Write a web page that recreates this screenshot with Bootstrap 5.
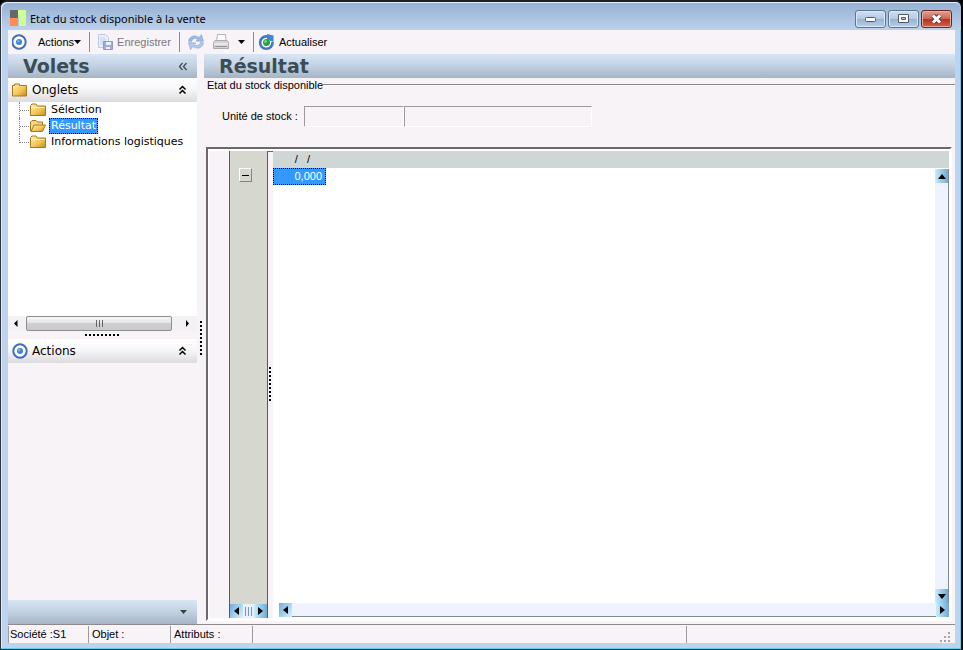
<!DOCTYPE html>
<html lang="fr">
<head>
<meta charset="utf-8">
<meta name="viewport" content="width=device-width, initial-scale=1">
<title>Etat du stock disponible à la vente</title>
<link href="https://cdn.jsdelivr.net/npm/bootstrap@5.3.0/dist/css/bootstrap.min.css" rel="stylesheet">
<style>
:root{--face:#f7f3f7;--frame:#bdd3ef}
body{font:11px/13px "Liberation Sans",Arial,sans-serif;color:#000;background:#000}
button{font:inherit;color:inherit;background:none;border:0;padding:0;line-height:13px}
svg{display:block;flex:none}
.win{background:var(--frame);border:1px solid #303438;border-top:2px solid #1c1f24;border-right:2px solid #000;box-shadow:inset -1px -1px #5cd3ee,inset 1px 1px #e4eefa;border-radius:7px 7px 0 0;padding:1px 6px 6px 7px}
.titlebar{height:27px;background:linear-gradient(#96b1d2,#a5bedd 40%,#bcd2ec);margin:0 -6px;padding:4px 9px 0 7px;border-radius:6px 6px 0 0}
.titlebar h1{font:11px/16px "Noto Sans","Open Sans",sans-serif;margin:0}
.wbtns{gap:2px}
.wbtn{width:31px;height:18px;border:1px solid #5c7592;border-radius:3px;background:linear-gradient(#cfdff0,#b4cae4 48%,#96b3d3 50%,#b5cfea);box-shadow:inset 0 0 0 1px #dbe8f7}
.wbtn.closer{background:linear-gradient(#e0a192,#cf6652 48%,#b8301c 50%,#d5604a);border-color:#6a2523;box-shadow:inset 0 0 0 1px #e7ada2}
.client{background:var(--face)}
.tools{height:24px}
.menu{padding:0 8px 0 10px}
.sep{width:1px;height:20px;background:#8c8a8c}
.off{color:#7b797b}
.banner{height:24px;flex:none;background:linear-gradient(#d8e5f4,#c4d4e5 45%,#a5b5c6);color:#3d4d56}
.banner h2{font:bold 19px/24px "DejaVu Sans",Verdana,sans-serif;margin:0}
.side{width:189px;flex:none}
.inset-15{padding-left:15px}
.fold{height:24px;flex:none;background:linear-gradient(#fff,#f7f6f8 45%,#dddbde);font:12px/18px "DejaVu Sans",Verdana,sans-serif;padding:0 10px 0 4px}
.tree{flex:214 0 0;min-height:0;background:#fff;font:11px/16px "DejaVu Sans",Verdana,sans-serif}
.tree li{height:16px;padding-left:11px}
.tree svg{margin-right:3px}
.tree .twig{width:11px;height:16px;flex:none;border-left:1px dotted #848284;background:repeating-linear-gradient(90deg,#848284 0 1px,transparent 1px 2px) 0 8px/11px 1px no-repeat}
.tree li:last-child .twig{height:9px;align-self:flex-start}
.tree a{color:#000;text-decoration:none;line-height:14px;padding:0 1px;border:1px solid transparent}
.tree a.on{background:#3399ff;color:#fff;border:1px dotted #000}
.rest{flex:236 0 0;min-height:0}
.hbar{height:15px;flex:none;background:#f3f1f4}
.hthumb{flex:1;height:15px;border:1px solid #8e8e93;border-radius:2px;background:linear-gradient(#f5f5f6,#e4e4e6 48%,#cfcfd3 50%,#c8c8cd)}
.grip-h{width:36px;height:2px;background:repeating-linear-gradient(90deg,#000 0 2px,transparent 2px 4px)}
.grip-v{width:2px;height:36px;background:repeating-linear-gradient(#000 0 2px,transparent 2px 4px)}
.split{width:7px;flex:none}
.vsplit{height:8px;flex:none}
.sidefoot{height:24px;flex:none;padding-right:10px;background:linear-gradient(#d8e5f4,#c4d4e5 45%,#a5b5c6)}
.group{height:69px;flex:none}
.group legend{font:inherit;float:none;margin:0;padding:0 0 0 3px;line-height:14px}
.rule{height:2px;flex:1;background:#8c8a8c;border-bottom:1px solid #fff}
.unit{padding:14px 0 0 18px;gap:6px}
.sunk{height:21px;border:1px solid;border-color:#9c9a9c #fff #fff #9c9a9c;background:var(--face);padding:0 3px;border-radius:0;min-width:0}
.w-code{width:100px}.w-name{width:188px}
.gridbox{border:2px solid;border-color:#6b696b #fff #fff #6b696b;margin:0 3px 3px 2px;min-height:0;padding:2px 1px 1px;background:#fff}
.gutter{width:20px;flex:none;background:var(--face)}
.band{width:39px;flex:none;background:#d6d7ce;border:solid #5a595a;border-width:0 1px}
.fold-btn{width:13px;height:14px;border:1px solid;border-color:#fff #848284 #848284 #fff;margin:17px 6px 0 0}
.lane{width:5px;flex:none;background:var(--face);border-top:1px solid #6b696b}
.lane .grip-v{margin-left:1px}
.minibar{height:14px;background:#eaf1fc}
.arrow{width:13px;height:14px;display:flex;align-items:center;justify-content:center;flex:none;background:linear-gradient(90deg,#c7effc,#6fa9da)}
.arrow.back{background:linear-gradient(120deg,#6fb0dd,#a8d3f0 55%,#dff2fd)}
.vscroll{padding-top:18px}
.track{background:#eff3ff;border-right:1px solid #848a94}
.foot{height:15px;flex:none;padding-left:6px}
.trackh{background:#eff3ff;border-bottom:1px solid #848a94;height:14px}
.data{width:100%;table-layout:fixed;border-collapse:collapse;line-height:15px}
.data th{height:17px;background:#ced7d6;font-weight:400;padding:0 16px 0 0;text-align:right;white-space:pre}
.data td{height:17px;padding:0 4px 0 0;text-align:right}
.data td.sel{background:#3399ff;color:#fff;outline:1px dotted #000;outline-offset:-1px}
.c1{width:53px}
.status{height:19px;flex:none;border-top:1px solid #8c8a8c;padding-top:1px;line-height:17px}
.status div{border-left:1px solid #9c9a9c;padding-left:3px}
.status div:first-child{padding-left:1px}
.s1{width:80px}.s2{width:82px}.s3{width:82px}
.s4{flex:437 0 0}.s5{flex:265 0 0}
</style>
<script src="https://cdn.jsdelivr.net/npm/bootstrap@5.3.0/dist/js/bootstrap.bundle.min.js"></script>
</head>
<body>
<svg width="0" height="0" class="position-absolute" aria-hidden="true">
<defs>
<linearGradient id="gold" x2="1" y2="1"><stop stop-color="#fff0b0"/><stop offset=".55" stop-color="#f3c65a"/><stop offset="1" stop-color="#c98a1c"/></linearGradient>
<symbol id="folder" viewBox="0 0 16 14"><path d="M.5 2.500 2 1h4l1.500 2H15.500V12.500H.5Z" fill="url(#gold)" stroke="#a67a1c"/><path d="M1.500 4.500H14.500" stroke="#fff6cf"/></symbol>
<symbol id="opened" viewBox="0 0 16 14"><path d="M.5 12V3L2 1.500h4L7.500 3H12.500v3" fill="#f6d684" stroke="#a67a1c"/><path d="M1 12.500 4 6H15.500L12.500 12.500Z" fill="url(#gold)" stroke="#a67a1c"/></symbol>
<symbol id="target" viewBox="0 0 16 16"><circle cx="8" cy="8" r="6.700" fill="#fff" stroke="#3f6dbb" stroke-width="2"/><circle cx="8" cy="8" r="3" fill="#3c82d0"/><circle cx="7.300" cy="7.300" r="1.300" fill="#76b2ea"/></symbol>
<symbol id="chev" viewBox="0 0 9 10"><path d="M1.500 4.500l3-3 3 3M1.500 8.500l3-3 3 3" fill="none" stroke="#000" stroke-width="1.500"/></symbol>
</defs>
</svg>
<div class="win vh-100 d-flex flex-column">
<header class="titlebar d-flex align-items-center">
<svg width="17" height="17" viewBox="0 0 17 17"><path d="M1 0h8v8H1z" fill="#686868"/><path d="M1 8h8v8H1z" fill="#ff8c50"/><path d="M9 0h8v16h-7V8H9z" fill="#ceff94"/></svg>
<h1 class="ms-1 me-auto">Etat du stock disponible à la vente</h1>
<div class="wbtns d-flex">
<button class="wbtn d-flex align-items-center justify-content-center" aria-label="Réduire"><svg width="13" height="7"><rect x="1.500" y="2.500" width="10" height="4" rx="1" fill="#fff" stroke="#505a66"/></svg></button>
<button class="wbtn d-flex align-items-center justify-content-center" aria-label="Agrandir"><svg width="11" height="9"><path d="M.5.500h10v8H.500zM3.500 3.500v2h4v-2z" fill="#fff" fill-rule="evenodd" stroke="#505a66"/></svg></button>
<button class="wbtn closer d-flex align-items-center justify-content-center" aria-label="Fermer"><svg width="13" height="10" viewBox="0 0 13 10"><path d="M3 1.500l7 7M10 1.500l-7 7" stroke="#554248" stroke-width="5"/><path d="M3 1.500l7 7M10 1.500l-7 7" stroke="#fff" stroke-width="3"/></svg></button>
</div>
</header>
<div class="client flex-grow-1 d-flex flex-column overflow-hidden">
<nav class="tools flex-shrink-0 d-flex align-items-center" aria-label="Outils">
<svg class="ms-1" width="16" height="16" viewBox="0 0 16 16"><use href="#target" transform="translate(-1)"/></svg>
<button class="menu d-flex align-items-center">Actions<svg width="7" height="4"><path d="M0 0h7L3.500 4z"/></svg></button>
<span class="sep"></span>
<button class="off d-flex align-items-center px-2" disabled>
<svg class="me-1" width="15" height="16" viewBox="0 0 15 16"><path d="M.5.500h7l3 3v10H.500z" fill="#e9eefb" stroke="#bccae8"/><path d="M2 4h5M2 6h6M2 8h4M2 10h3" stroke="#c5d3ee"/><path d="M5.500 7.500h9v8h-9z" fill="#a4a9db" stroke="#9197cc"/><path d="M8 8h5v3H8zM8 13h4v2H8z" fill="#eef1ff"/></svg>Enregistrer</button>
<span class="sep"></span>
<button class="ps-2" aria-label="Synchroniser" disabled><svg width="16" height="16" viewBox="0 0 16 16"><path d="M.5 7C1 3.500 4.500 1 8.500 2.200L11 3.500 13.500.500 15.500 7.500 8 7 9.800 5C7 3.800 4.500 4.500 3.500 7.500Z" fill="#9fb9e4" stroke="#86a5d6" stroke-width=".6"/><path d="M15.500 9C15 12.500 11.500 15 7.500 13.800L5 12.500 2.500 15.500.500 8.500 8 9 6.200 11C9 12.200 11.500 11.500 12.500 8.500Z" fill="#b0c8ec" stroke="#86a5d6" stroke-width=".6"/></svg></button>
<button class="d-flex align-items-center ps-2 pe-2" aria-label="Imprimer"><svg width="18" height="16" viewBox="0 0 18 16"><path d="M4.500 8 5.500.500h8L14 8" fill="#fafafa" stroke="#b5b5b8"/><path d="M1.500 8.500 3 6.500H15l1.500 2v6h-15Z" fill="#d3d2d5" stroke="#aaa9ad"/><path d="M2 10h14" stroke="#fff"/><path d="M3 12.500h12" stroke="#949397"/></svg><svg class="ms-2" width="7" height="4"><path d="M0 0h7L3.500 4z"/></svg></button>
<span class="sep"></span>
<button class="d-flex align-items-center px-1"><svg class="me-1" width="17" height="17" viewBox="0 0 17 17"><path d="M9.500 2.500A6.200 6.200 0 1 0 14.500 8" fill="#fff" stroke="#3f77c4" stroke-width="2.600"/><path d="M9 0 15.500 1.500V8L9 5.500Z" fill="#3f86cf"/><circle cx="8.500" cy="8.500" r="3.500" fill="#23a538"/><circle cx="7.500" cy="7.500" r="1.500" fill="#76d77b"/></svg>Actualiser</button>
</nav>
<div class="flex-grow-1 d-flex overflow-hidden">
<aside class="side d-flex flex-column">
<div class="banner inset-15 d-flex align-items-center justify-content-between pe-2"><h2>Volets</h2><button aria-label="Replier"><svg width="12" height="9"><path d="M5.500 1l-3 3.500 3 3.500M9.500 1l-3 3.500 3 3.500" fill="none" stroke="#3d4d56" stroke-width="1.300"/></svg></button></div>
<button class="fold d-flex align-items-center"><svg class="me-1" width="16" height="14" viewBox="0 0 16 14"><path d="M.5 2.500h2V1h5v1.500h7v10.500H.5z" fill="url(#gold)" stroke="#a67a1c"/></svg>Onglets<svg class="ms-auto" width="9" height="10"><use href="#chev"/></svg></button>
<ul class="tree list-unstyled mb-0 text-nowrap overflow-hidden">
<li class="d-flex align-items-center"><span class="twig"></span><svg width="16" height="14"><use href="#folder"/></svg><a href="#">Sélection</a></li>
<li class="d-flex align-items-center"><span class="twig"></span><svg width="16" height="14"><use href="#opened"/></svg><a href="#" class="on">Résultat</a></li>
<li class="d-flex align-items-center"><span class="twig"></span><svg width="16" height="14"><use href="#folder"/></svg><a href="#">Informations logistiques</a></li>
</ul>
<div class="hbar d-flex align-items-center">
<button class="px-1" aria-label="Gauche"><svg width="10" height="7"><path d="M5.500 0v7L2 3.500z"/></svg></button>
<div class="hthumb d-flex align-items-center justify-content-center"><svg width="9" height="7"><path d="M1.500 0v7M4.500 0v7M7.500 0v7" stroke="#666"/></svg></div>
<button class="px-2" aria-label="Droite"><svg width="9" height="7"><path d="M8 0v7l3-3.500z" transform="translate(-2)"/></svg></button>
</div>
<div class="vsplit d-flex justify-content-center align-items-center"><span class="grip-h"></span></div>
<button class="fold d-flex align-items-center"><svg class="me-1" width="16" height="16"><use href="#target"/></svg>Actions<svg class="ms-auto" width="9" height="10"><use href="#chev"/></svg></button>
<div class="rest"></div>
<div class="sidefoot d-flex align-items-center justify-content-end"><button aria-label="Options"><svg width="7" height="4"><path d="M0 0h7L3.500 4z" fill="#344"/></svg></button></div>
</aside>
<div class="split d-flex align-items-center justify-content-center"><span class="grip-v"></span></div>
<main class="flex-grow-1 d-flex flex-column overflow-hidden">
<div class="banner inset-15"><h2>Résultat</h2></div>
<fieldset class="group">
<legend class="d-flex align-items-center w-100"><span>Etat du stock disponible</span><span class="rule"></span></legend>
<div class="unit d-flex align-items-center"><label for="unit">Unité de stock :</label><div class="d-flex"><input id="unit" class="sunk w-code" readonly><input class="sunk w-name" aria-label="Libellé de l'unité" readonly></div></div>
</fieldset>
<div class="gridbox flex-grow-1 d-flex overflow-hidden">
<div class="gutter"></div>
<div class="band d-flex flex-column align-items-center justify-content-between">
<button class="fold-btn d-flex align-items-center justify-content-center" aria-label="Replier le groupe"><svg width="7" height="1"><path d="M0 0h7v1H0z"/></svg></button>
<div class="minibar w-100 d-flex justify-content-between align-items-center"><button class="arrow back" aria-label="Gauche"><svg width="5" height="8"><path d="M5 0v8L0 4z"/></svg></button><svg width="9" height="9"><path d="M1.500 0v9M4.500 0v9M7.500 0v9" stroke="#6f9bc8"/></svg><button class="arrow" aria-label="Droite"><svg width="5" height="8"><path d="M0 0v8l5-4z"/></svg></button></div>
</div>
<div class="lane d-flex align-items-center"><span class="grip-v"></span></div>
<div class="flex-grow-1 d-flex flex-column overflow-hidden">
<div class="flex-grow-1 position-relative">
<table class="data"><colgroup><col class="c1"><col></colgroup>
<thead><tr><th scope="col">/   /</th><th></th></tr></thead>
<tbody><tr><td class="sel">0,000</td><td></td></tr></tbody></table>
<div class="vscroll position-absolute end-0 bottom-0 top-0 d-flex">
<div class="track d-flex flex-column justify-content-between"><button class="arrow" aria-label="Haut"><svg width="8" height="5"><path d="M0 5h8L4 0z"/></svg></button><button class="arrow" aria-label="Bas"><svg width="8" height="5"><path d="M0 0h8L4 5z"/></svg></button></div>
</div>
</div>
<div class="foot"><div class="trackh d-flex justify-content-between"><button class="arrow back" aria-label="Gauche"><svg width="5" height="8"><path d="M5 0v8L0 4z"/></svg></button><button class="arrow" aria-label="Droite"><svg width="5" height="8"><path d="M0 0v8l5-4z"/></svg></button></div></div>
</div>
</div>
</main>
</div>
<footer class="status d-flex"><div class="s1">Société :S1</div><div class="s2">Objet :</div><div class="s3">Attributs :</div><div class="s4"></div><div class="s5 d-flex justify-content-end align-items-end pe-1"><svg width="11" height="11"><path d="M8 0h2v2H8zM4 4h2v2H4zM8 4h2v2H8zM0 8h2v2H0zM4 8h2v2H4zM8 8h2v2H8z" fill="#a5a2a5"/></svg></div></footer>
</div>
</div>
</body>
</html>
